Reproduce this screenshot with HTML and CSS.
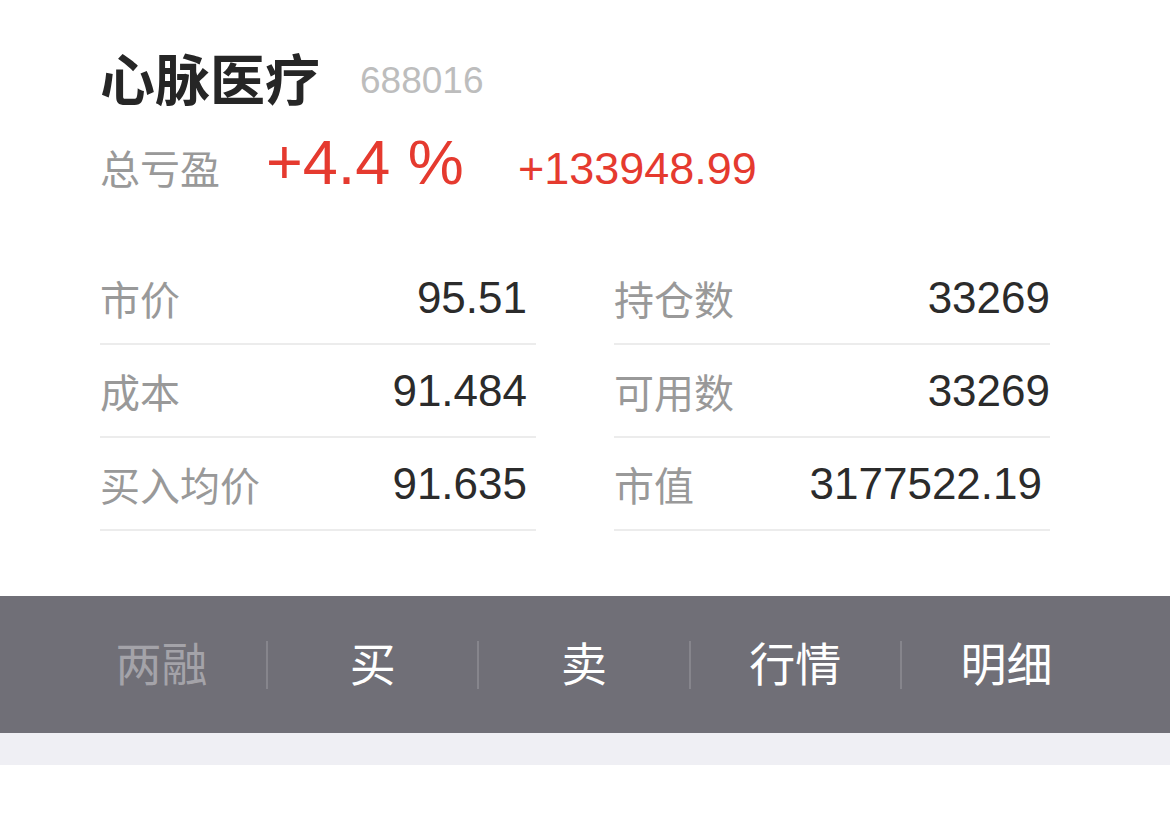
FILE: index.html
```html
<!DOCTYPE html>
<html lang="zh-CN">
<head>
  <meta charset="UTF-8">
  <title>心脉医疗</title>
  <meta name="viewport" content="width=device-width, initial-scale=1.0">
  <link rel="stylesheet" href="styles.css">
</head>
<body>

  <div class="header">
    <div class="title-row">
      <span class="name">心脉医疗</span>
      <span class="code">688016</span>
    </div>
    <div class="profit-row">
      <span class="profit-label">总亏盈</span>
      <span class="profit-rate">+4.4 %</span>
      <span class="profit-amount">+133948.99</span>
    </div>
  </div>

  <div class="grid">
    <div class="col">
      <div class="row"><span class="label">市价</span><span class="value">95.51</span></div>
      <div class="row"><span class="label">成本</span><span class="value">91.484</span></div>
      <div class="row"><span class="label">买入均价</span><span class="value">91.635</span></div>
    </div>
    <div class="col right">
      <div class="row"><span class="label">持仓数</span><span class="value">33269</span></div>
      <div class="row"><span class="label">可用数</span><span class="value">33269</span></div>
      <div class="row"><span class="label">市值</span><span class="value narrow">3177522.19</span></div>
    </div>
  </div>

  <div class="actions">
    <div class="action disabled">两融</div>
    <div class="action">买</div>
    <div class="action">卖</div>
    <div class="action">行情</div>
    <div class="action">明细</div>
  </div>

  <div class="spacer"></div>

</body>
</html>
```

FILE: styles.css
```css
* { box-sizing: border-box; }

body, html {
  margin: 0;
  padding: 0;
  background: #fff;
  font-family: "Liberation Sans", "Noto Sans CJK SC", sans-serif;
}

.header {
  padding: 46px 0 0 100px;
}

.title-row {
  display: flex;
  align-items: center;
  gap: 40px;
  height: 70px;
}

.name {
  font-size: 55px;
  font-weight: 700;
  color: #262626;
  line-height: 70px;
}

.code {
  font-size: 37px;
  color: #bdbdbd;
}

.profit-row {
  display: flex;
  align-items: baseline;
  height: 80px;
  line-height: 80px;
  margin-top: 6px;
}

.profit-label {
  font-size: 40px;
  color: #999;
  margin-right: 46px;
}

.profit-rate {
  font-size: 63px;
  color: #e53a2f;
  margin-right: 54px;
}

.profit-amount {
  font-size: 45px;
  color: #e53a2f;
}

.grid {
  display: grid;
  grid-template-columns: 436px 436px;
  gap: 78px;
  padding: 50px 0 0 100px;
}

.row {
  display: flex;
  justify-content: space-between;
  align-items: center;
  height: 93px;
  border-bottom: 2px solid #ececec;
}

.label {
  font-size: 40px;
  color: #999;
}

.value {
  font-size: 44px;
  color: #2b2b2b;
  padding-right: 9px;
}

.right .value {
  padding-right: 0;
}

.right .value.narrow {
  padding-right: 8px;
}

.actions {
  display: flex;
  align-items: center;
  height: 137px;
  margin-top: 65px;
  padding: 0 59px 0 57px;
  background: #706f77;
}

.action {
  flex: 1;
  text-align: center;
  font-size: 46px;
  line-height: 48px;
  color: #fff;
  border-left: 2px solid #86858c;
}

.action:first-child {
  border-left: none;
}

.action.disabled {
  color: #a4a3a9;
}

.spacer {
  height: 32px;
  background: #efeff4;
}
```
